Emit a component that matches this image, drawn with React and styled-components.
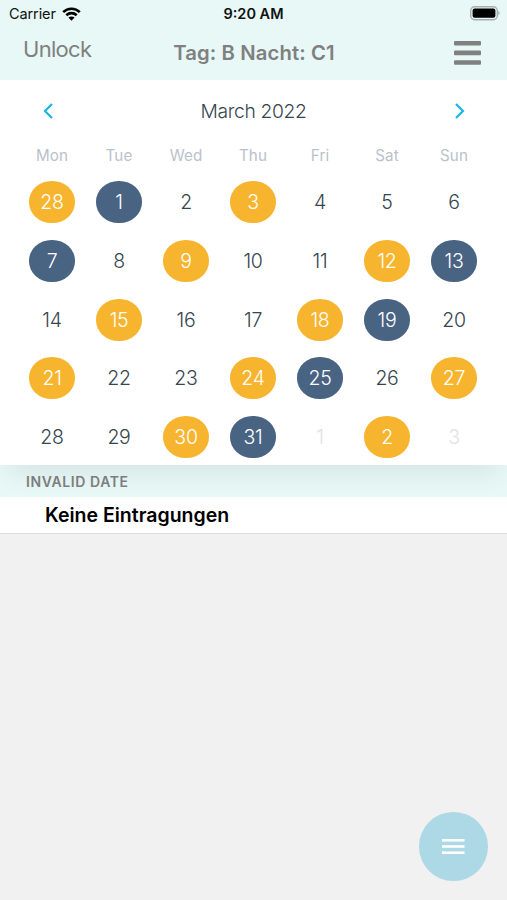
import React from 'react';
import styled, { createGlobalStyle } from 'styled-components';

const GlobalStyle = createGlobalStyle`
  * {
    box-sizing: border-box;
  }

  body {
    margin: 0;
    background-color: #f1f1f1;
    font-family: Inter, 'Liberation Sans', sans-serif;
  }
`;

const Screen = styled.div`
  position: relative;
  display: flex;
  flex-direction: column;
  width: 507px;
  height: 900px;
  overflow: hidden;
  background-color: #f1f1f1;
`;

const TopArea = styled.header`
  height: 80px;
  background-color: #e7f8f7;
`;

const StatusBar = styled.div`
  display: grid;
  grid-template-columns: 1fr auto 1fr;
  align-items: center;
  height: 27px;
  padding: 0 6px 0 9px;
  color: #111;
  font-size: 14.5px;
`;

const Carrier = styled.div`
  display: flex;
  align-items: center;
  gap: 6px;
  letter-spacing: -0.1px;
`;

const Clock = styled.div`
  font-weight: 600;
  font-size: 14.5px;
  margin-right: 3px;
`;

const Battery = styled.svg`
  justify-self: end;
`;

const NavBar = styled.div`
  display: grid;
  grid-template-columns: 1fr auto 1fr;
  align-items: center;
  height: 50px;
  padding: 0 26px 0 23px;
  color: #808080;
`;

const UnlockButton = styled.button`
  justify-self: start;
  padding: 0 0 7px;
  border: 0;
  background: none;
  color: inherit;
  font: 400 22px Inter, sans-serif;
  letter-spacing: -0.7px;
`;

const NavTitle = styled.h1`
  margin: 0 0 0 4px;
  font-size: 20.3px;
  font-weight: 600;
  letter-spacing: 0.1px;
`;

const MenuButton = styled.button`
  display: flex;
  justify-self: end;
  padding: 1px 0 0;
  border: 0;
  background: none;
  color: inherit;
`;

const Calendar = styled.section`
  position: relative;
  z-index: 1;
  height: 385px;
  padding: 0 18.5px;
  background-color: #fff;
  box-shadow: 0 14px 26px -8px rgba(0, 0, 0, 0.09);
`;

const MonthRow = styled.div`
  display: flex;
  align-items: center;
  justify-content: space-between;
  height: 62px;
  padding: 0 22px;
  color: #35454f;
`;

const MonthName = styled.div`
  font-size: 19.3px;
  font-weight: 300;
  letter-spacing: -0.35px;
`;

const Arrow = styled.svg`
  fill: none;
  stroke: #18b5e9;
  stroke-width: 2.2;
`;

const Week = styled.div`
  display: grid;
  grid-template-columns: repeat(7, 67px);
  justify-items: center;
`;

const WeekDay = styled.div`
  height: 39.3px;
  line-height: 27px;
  color: #b9c2cb;
  font-size: 15.2px;
  letter-spacing: 0.1px;
`;

const shiftColors = { day: '#f7b52f', night: '#496383' };

const Day = styled.div`
  display: flex;
  align-items: center;
  justify-content: center;
  width: 46.5px;
  height: 42px;
  margin-bottom: 16.7px;
  border-radius: 22.5px / 20.5px;
  background-color: ${({ $shift }) => shiftColors[$shift] || 'transparent'};
  color: ${({ $shift, $muted }) => ($shift ? '#fff' : $muted ? '#dde2e5' : '#35454f')};
  font-size: 19.5px;
  font-weight: 300;
  letter-spacing: -0.25px;
`;

const SectionHeader = styled.h2`
  height: 32px;
  margin: 0;
  padding-left: 26px;
  background-color: #e7f8f7;
  color: #808080;
  font-size: 14px;
  font-weight: 600;
  line-height: 33px;
  letter-spacing: 0.6px;
`;

const Entry = styled.div`
  height: 37px;
  padding-left: 45px;
  border-bottom: 1.5px solid #dcdcdc;
  background-color: #fff;
  color: #000;
  font-size: 19.5px;
  font-weight: 600;
  line-height: 36px;
`;

const FloatingButton = styled.button`
  position: absolute;
  right: 19.5px;
  bottom: 19.5px;
  display: flex;
  align-items: center;
  justify-content: center;
  width: 68.5px;
  height: 68.5px;
  padding: 0;
  border: 0;
  border-radius: 50%;
  background-color: #add8e6;
`;

const weekDays = ['Mon', 'Tue', 'Wed', 'Thu', 'Fri', 'Sat', 'Sun'];

const weeks = [
  [28, 1, 2, 3, 4, 5, 6],
  [7, 8, 9, 10, 11, 12, 13],
  [14, 15, 16, 17, 18, 19, 20],
  [21, 22, 23, 24, 25, 26, 27],
  [28, 29, 30, 31, 1, 2, 3],
];

// one letter per day: d = day shift, n = night shift
const shifts = ['dn-d---', 'n-d--dn', '-d--dn-', 'd--dn-d', '--dn-d-'];
const shiftNames = { d: 'day', n: 'night' };

const App = () => {
  return (
    <>
      <GlobalStyle />
      <Screen>
        <TopArea>
          <StatusBar>
            <Carrier>
              Carrier
              <svg width="19" height="14" viewBox="0 0 19 14" fill="none" stroke="#000" strokeWidth="2.6">
                <path d="M1.2 5.2C5.8 0.6 13.2 0.6 17.8 5.2" />
                <path d="M4.3 8.2C7.2 5.4 11.8 5.4 14.7 8.2" />
                <path d="M9.5 13.7L6.4 10.6C8.2 9 10.8 9 12.6 10.6Z" fill="#000" stroke="none" />
              </svg>
            </Carrier>
            <Clock>9:20 AM</Clock>
            <Battery width="31" height="15" viewBox="0 0 31 15">
              <rect x="0.7" y="0.7" width="26.6" height="13" rx="4" fill="none" stroke="#a5afae" strokeWidth="1.4" />
              <rect x="2.6" y="2.6" width="22.8" height="9.2" rx="2" fill="#000" />
              <path d="M28.3 4.8Q31 7.2 28.3 9.6Z" fill="#a5afae" />
            </Battery>
          </StatusBar>
          <NavBar>
            <UnlockButton>Unlock</UnlockButton>
            <NavTitle>Tag: B Nacht: C1</NavTitle>
            <MenuButton aria-label="Menu">
              <svg width="27" height="24" viewBox="0 0 27 24" fill="currentColor">
                <rect y="0" width="27" height="4.6" rx="1" />
                <rect y="9.6" width="27" height="4.6" rx="1" />
                <rect y="19.2" width="27" height="4.6" rx="1" />
              </svg>
            </MenuButton>
          </NavBar>
        </TopArea>

        <Calendar>
          <MonthRow>
            <Arrow width="14" height="18" viewBox="0 0 14 18">
              <path d="M11 2L4 9L11 16" />
            </Arrow>
            <MonthName>March 2022</MonthName>
            <Arrow width="14" height="18" viewBox="0 0 14 18">
              <path d="M3 2L10 9L3 16" />
            </Arrow>
          </MonthRow>
          <Week>
            {weekDays.map((name) => (
              <WeekDay key={name}>{name}</WeekDay>
            ))}
          </Week>
          {weeks.map((days, w) => (
            <Week key={w}>
              {days.map((day, i) => (
                <Day key={i} $shift={shiftNames[shifts[w][i]]} $muted={w === 4 && day < 7}>
                  {day}
                </Day>
              ))}
            </Week>
          ))}
        </Calendar>

        <SectionHeader>INVALID DATE</SectionHeader>
        <Entry>Keine Eintragungen</Entry>

        <FloatingButton aria-label="Actions">
          <svg width="23" height="17" viewBox="0 0 23 17" fill="#fff">
            <rect y="1" width="22.5" height="2.6" />
            <rect y="7.2" width="22.5" height="2.6" />
            <rect y="13.4" width="22.5" height="2.6" />
          </svg>
        </FloatingButton>
      </Screen>
    </>
  );
};

export default App;
